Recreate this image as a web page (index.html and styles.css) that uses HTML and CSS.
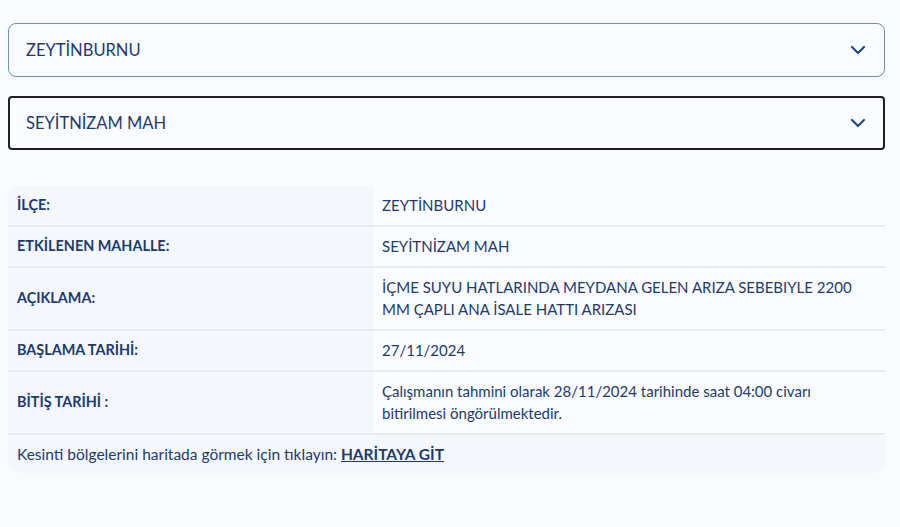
FILE: index.html
```html
<!DOCTYPE html>
<html lang="tr">
<head>
    <meta charset="utf-8">
    <title>Arıza Kesinti Bilgisi</title>
    <link rel="stylesheet" href="styles.css">
</head>
<body>
    <div class="main">
        <div class="select select-district">
            <span>ZEYTİNBURNU</span>
            <svg class="chevron" width="16" height="10" viewBox="0 0 16 10"><path d="M2 2l6 6 6-6" fill="none" stroke="#1d4a8c" stroke-width="2.2" stroke-linecap="round" stroke-linejoin="round"/></svg>
        </div>
        <div class="select select-active">
            <span>SEYİTNİZAM MAH</span>
            <svg class="chevron" width="16" height="10" viewBox="0 0 16 10"><path d="M2 2l6 6 6-6" fill="none" stroke="#1d4a8c" stroke-width="2.2" stroke-linecap="round" stroke-linejoin="round"/></svg>
        </div>

        <table class="info">
            <tr>
                <th>İLÇE:</th>
                <td>ZEYTİNBURNU</td>
            </tr>
            <tr>
                <th>ETKİLENEN MAHALLE:</th>
                <td>SEYİTNİZAM MAH</td>
            </tr>
            <tr>
                <th>AÇIKLAMA:</th>
                <td>İÇME SUYU HATLARINDA MEYDANA GELEN ARIZA SEBEBIYLE 2200 MM ÇAPLI ANA İSALE HATTI ARIZASI</td>
            </tr>
            <tr>
                <th>BAŞLAMA TARİHİ:</th>
                <td>27/11/2024</td>
            </tr>
            <tr>
                <th>BİTİŞ TARİHİ :</th>
                <td>Çalışmanın tahmini olarak 28/11/2024 tarihinde saat 04:00 civarı bitirilmesi öngörülmektedir.</td>
            </tr>
            <tr class="footer-row">
                <td colspan="2">Kesinti bölgelerini haritada görmek için tıklayın: <a href="#">HARİTAYA GİT</a></td>
            </tr>
        </table>
    </div>
</body>
</html>
```

FILE: styles.css
```css
* {
    margin: 0;
    padding: 0;
    box-sizing: border-box;
}

body {
    font-family: Lato, "Open Sans", sans-serif;
    background-color: #f9fbfe;
    color: #1c3a6c;
}

.main {
    width: 877px;
    margin: 23px 0 0 8px;
}

.select {
    display: flex;
    align-items: center;
    justify-content: space-between;
    height: 54px;
    padding: 0 18px 0 17px;
    font-size: 16.5px;
    background-color: #fafcff;
    margin-bottom: 19px;
}

.select-district {
    border: 1px solid #6f8fc4;
    border-radius: 8px;
}

.select-active {
    border: 2px solid #1f1f1f;
    border-radius: 4px;
    padding-left: 16px;
    padding-right: 17px;
}

.chevron {
    display: block;
}

.info {
    width: 100%;
    margin-top: 36px;
    border-collapse: separate;
    border-spacing: 0;
    border-radius: 12px;
    overflow: hidden;
    background-color: #f4f7fb;
}

.info th,
.info td {
    text-align: left;
    vertical-align: middle;
    padding: 8px 9px 9px 9px;
    line-height: 22px;
    border-bottom: 2px solid #e7ebf0;
}

.info th {
    width: 365px;
    font-size: 14.4px;
    font-weight: 700;
    background-color: #f4f7fb;
}

.info td {
    font-size: 15px;
    font-weight: 400;
    background-color: #fbfcfe;
    padding-right: 20px;
}

.footer-row td {
    font-size: 15.5px;
    background-color: #f4f7fb;
    border-bottom: none;
    padding: 8px 9px;
}

.footer-row a {
    color: #1c3a6c;
    font-weight: 700;
}
```
